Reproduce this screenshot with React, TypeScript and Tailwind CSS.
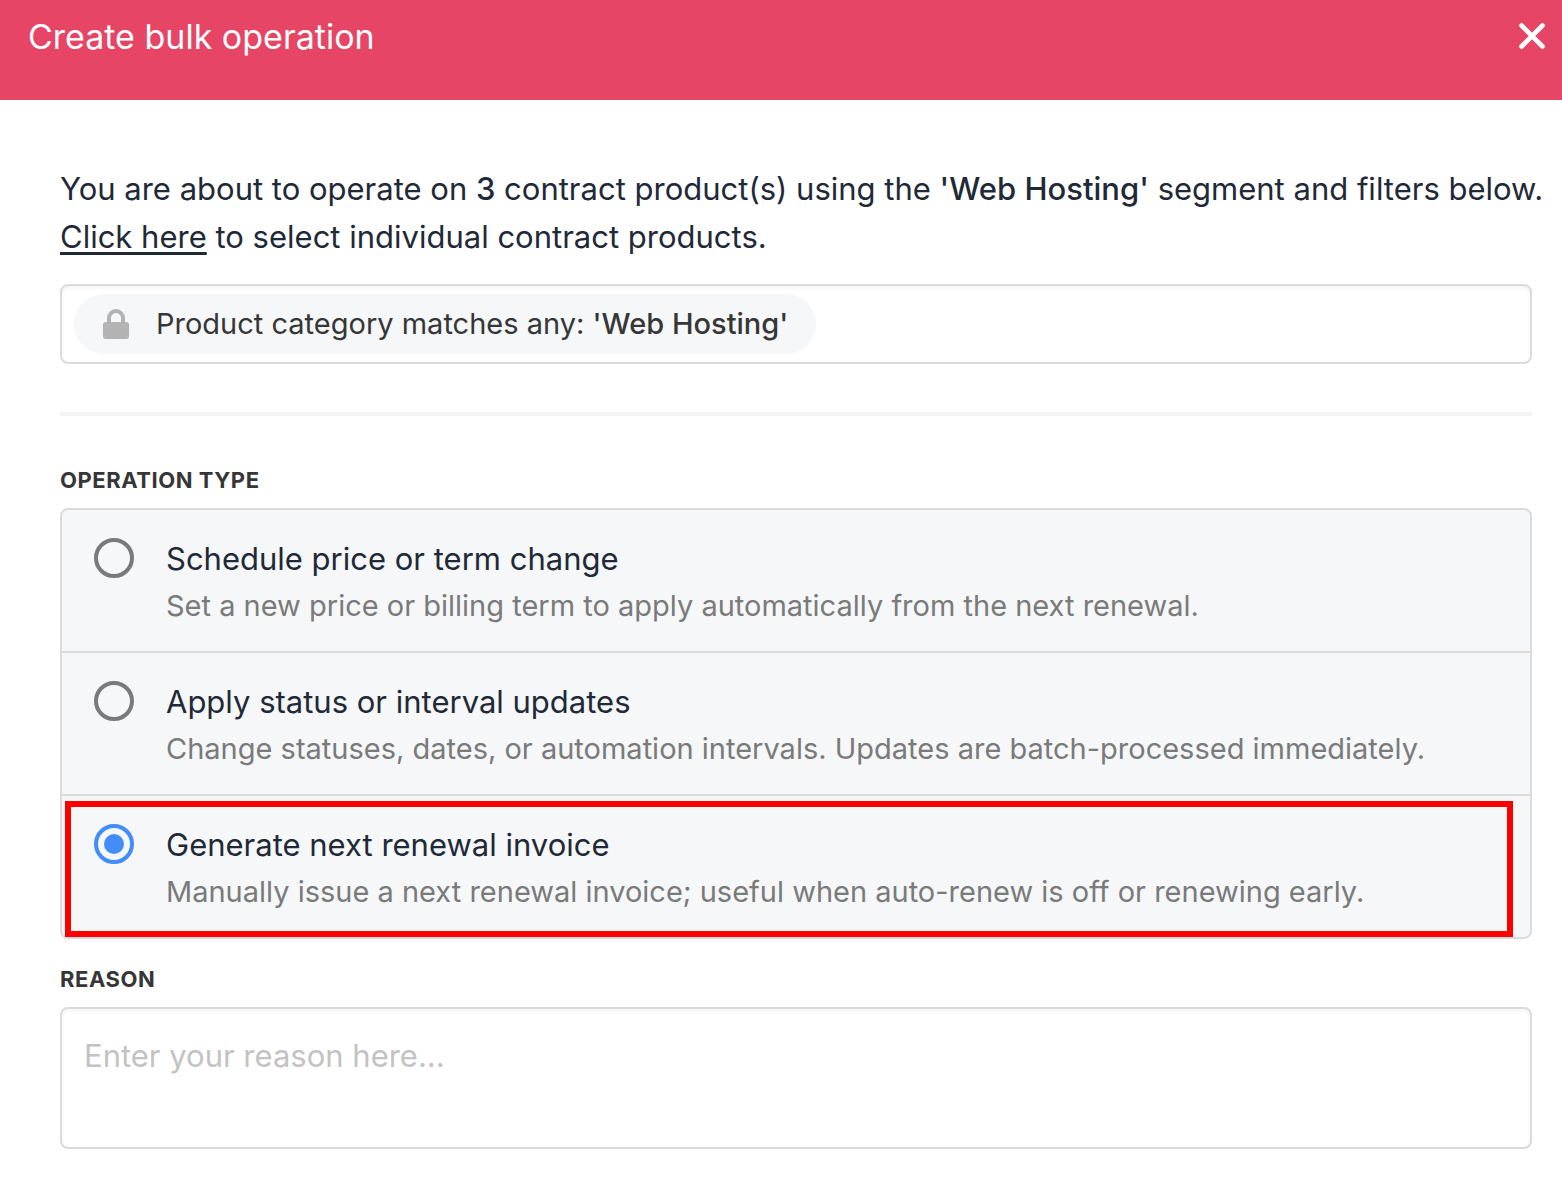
import { useState } from "react";

const operationTypes = [
  {
    id: "schedule",
    title: "Schedule price or term change",
    description:
      "Set a new price or billing term to apply automatically from the next renewal.",
  },
  {
    id: "status",
    title: "Apply status or interval updates",
    description:
      "Change statuses, dates, or automation intervals. Updates are batch-processed immediately.",
  },
  {
    id: "invoice",
    title: "Generate next renewal invoice",
    description:
      "Manually issue a next renewal invoice; useful when auto-renew is off or renewing early.",
  },
];

const LockIcon = () => (
  <svg width="28" height="32" viewBox="0 0 28 32" aria-hidden="true">
    <path
      d="M7 15V10a7 7 0 0 1 14 0V15"
      fill="none"
      stroke="#b3b3b3"
      strokeWidth="4"
    />
    <rect x="1" y="14" width="26" height="17" rx="3" fill="#b3b3b3" />
  </svg>
);

const App = () => {
  const [selected, setSelected] = useState("invoice");
  const [reason, setReason] = useState("");

  return (
    <div className="min-h-screen bg-white font-['Inter',sans-serif] text-[#1f2937]">
      <header className="h-25 bg-[#e74565] pl-7 pr-4 pt-3 flex justify-between items-start">
        <h1 className="text-[34px] leading-[50px] font-normal text-white">
          Create bulk operation
        </h1>

        <button type="button" aria-label="Close" className="h-12 cursor-pointer">
          <svg width="28" height="28" viewBox="0 0 28 28">
            <path
              d="M3.5 3.5l21 21M24.5 3.5l-21 21"
              stroke="#fff"
              strokeWidth="4.6"
              strokeLinecap="round"
            />
          </svg>
        </button>
      </header>

      <main className="pl-15 pr-[30px] pt-[65px] pb-12">
        <p className="-mr-5 text-[31px] leading-12">
          You are about to operate on <b className="font-medium">3</b> contract
          product(s) using the <b className="font-medium">'Web Hosting'</b>{" "}
          segment and filters below.{" "}
          <a
            href="#"
            className="underline decoration-3 underline-offset-4 [text-decoration-skip-ink:none]"
          >
            Click here
          </a>{" "}
          to select individual contract products.
        </p>

        <div className="mt-[23px] h-20 px-3 flex items-center border-2 border-[#dbdbdb] rounded-lg shadow-[inset_0_2px_4px_rgba(10,10,10,0.05)]">
          <div className="h-15 px-7 flex items-center gap-[26px] rounded-full bg-[#f5f7f9] text-[#363636]">
            <LockIcon />
            <span className="text-[29px] leading-12">
              Product category matches any:{" "}
              <b className="font-medium">'Web Hosting'</b>
            </span>
          </div>
        </div>

        <hr className="mt-12 border-t-4 border-[#f5f5f5]" />

        <fieldset className="mt-12">
          <legend className="mb-3 text-[22px] leading-8 font-bold tracking-wide text-[#363636]">
            OPERATION TYPE
          </legend>

          <div className="border-2 border-[#dbdbdb] rounded-lg bg-[#f5f7f9] divide-y-2 divide-[#dbdbdb]">
            {operationTypes.map((item) => (
              <label
                key={item.id}
                htmlFor={item.id}
                className="relative flex items-start gap-8 px-8 pt-[25px] pb-[23px] cursor-pointer"
              >
                <input
                  type="radio"
                  id={item.id}
                  name="operation"
                  checked={selected === item.id}
                  onChange={() => setSelected(item.id)}
                  className="mt-[3px] size-10 shrink-0 appearance-none rounded-full border-4 border-[#7a7a7a] checked:border-[#428df8] grid place-items-center before:size-5 before:rounded-full checked:before:bg-[#428df8]"
                />

                <span className="block">
                  <span className="block text-[31px] leading-12">
                    {item.title}
                  </span>
                  <span className="block text-[29px] leading-[45px] text-[#7a7a7a]">
                    {item.description}
                  </span>
                </span>

                {selected === item.id && (
                  <span className="absolute top-[5px] right-[17px] bottom-0 left-[3px] border-6 border-[#ff0000] pointer-events-none" />
                )}
              </label>
            ))}
          </div>
        </fieldset>

        <div className="mt-6">
          <label
            htmlFor="reason"
            className="block mb-3 text-[22px] leading-8 font-bold tracking-wide text-[#363636]"
          >
            REASON
          </label>
          <textarea
            id="reason"
            value={reason}
            onChange={(e) => setReason(e.target.value)}
            placeholder="Enter your reason here..."
            className="block w-full h-[142px] px-[22px] py-[23px] resize-none border-2 border-[#dbdbdb] rounded-lg text-[31px] leading-12 placeholder:text-[#c3c3c3] shadow-[inset_0_2px_4px_rgba(10,10,10,0.05)]"
          />
        </div>
      </main>
    </div>
  );
};

export default App;
